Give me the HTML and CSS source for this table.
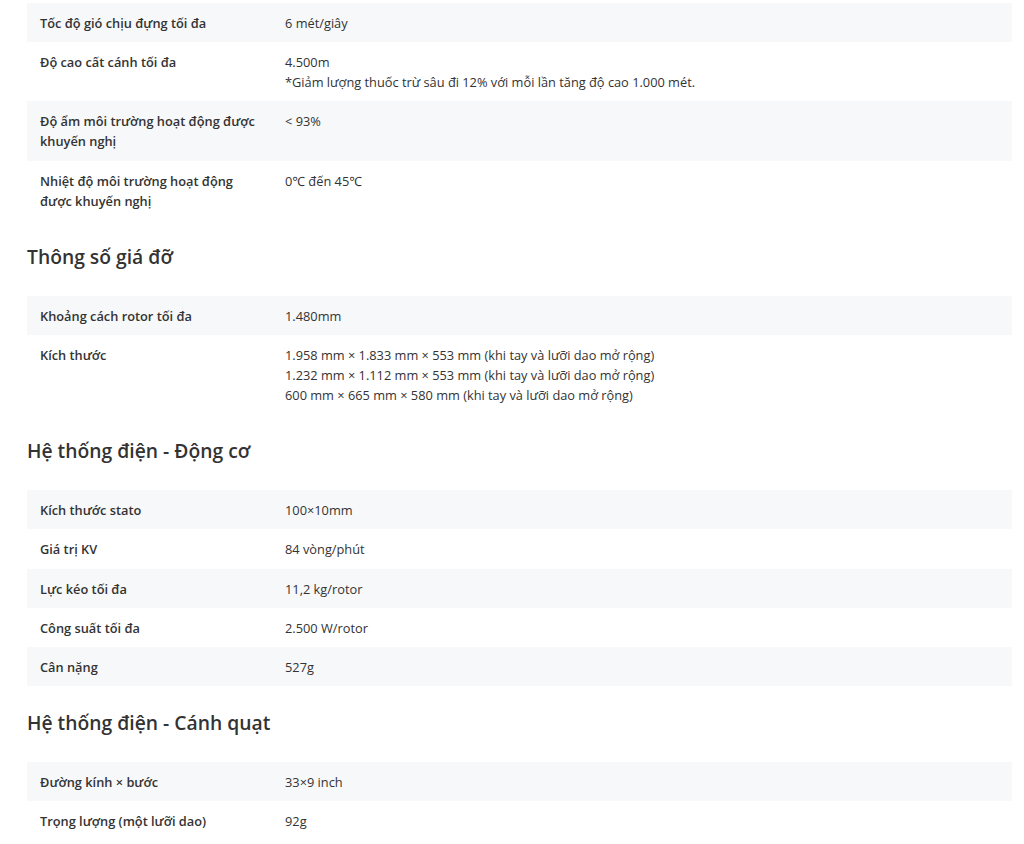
FILE: index.html
```html
<!doctype html>
<html lang="vi">
    <head>
        <meta charset="UTF-8" />
        <meta name="viewport" content="width=device-width, initial-scale=1.0" />
        <title>Thông số kỹ thuật</title>
        <link rel="stylesheet" href="styles.css">
    </head>
    <body>
        <div class="specs">
            <div class="spec-table">
                <div class="spec-row">
                    <div class="spec-label">Tốc độ gió chịu đựng tối đa</div>
                    <div class="spec-value">6 mét/giây</div>
                </div>
                <div class="spec-row">
                    <div class="spec-label">Độ cao cất cánh tối đa</div>
                    <div class="spec-value">4.500m<br />*Giảm lượng thuốc trừ sâu đi 12% với mỗi lần tăng độ cao 1.000 mét.</div>
                </div>
                <div class="spec-row">
                    <div class="spec-label">Độ ẩm môi trường hoạt động được khuyến nghị</div>
                    <div class="spec-value">&lt; 93%</div>
                </div>
                <div class="spec-row">
                    <div class="spec-label">Nhiệt độ môi trường hoạt động được khuyến nghị</div>
                    <div class="spec-value">0℃ đến 45℃</div>
                </div>
            </div>

            <h2 class="spec-title">Thông số giá đỡ</h2>
            <div class="spec-table">
                <div class="spec-row">
                    <div class="spec-label">Khoảng cách rotor tối đa</div>
                    <div class="spec-value">1.480mm</div>
                </div>
                <div class="spec-row">
                    <div class="spec-label">Kích thước</div>
                    <div class="spec-value">
                        1.958 mm × 1.833 mm × 553 mm (khi tay và lưỡi dao mở rộng)<br />
                        1.232 mm × 1.112 mm × 553 mm (khi tay và lưỡi dao mở rộng)<br />
                        600 mm × 665 mm × 580 mm (khi tay và lưỡi dao mở rộng)
                    </div>
                </div>
            </div>

            <h2 class="spec-title">Hệ thống điện - Động cơ</h2>
            <div class="spec-table">
                <div class="spec-row">
                    <div class="spec-label">Kích thước stato</div>
                    <div class="spec-value">100×10mm</div>
                </div>
                <div class="spec-row">
                    <div class="spec-label">Giá trị KV</div>
                    <div class="spec-value">84 vòng/phút</div>
                </div>
                <div class="spec-row">
                    <div class="spec-label">Lực kéo tối đa</div>
                    <div class="spec-value">11,2 kg/rotor</div>
                </div>
                <div class="spec-row">
                    <div class="spec-label">Công suất tối đa</div>
                    <div class="spec-value">2.500 W/rotor</div>
                </div>
                <div class="spec-row">
                    <div class="spec-label">Cân nặng</div>
                    <div class="spec-value">527g</div>
                </div>
            </div>

            <h2 class="spec-title">Hệ thống điện - Cánh quạt</h2>
            <div class="spec-table">
                <div class="spec-row">
                    <div class="spec-label">Đường kính × bước</div>
                    <div class="spec-value">33×9 inch</div>
                </div>
                <div class="spec-row">
                    <div class="spec-label">Trọng lượng (một lưỡi dao)</div>
                    <div class="spec-value">92g</div>
                </div>
            </div>
        </div>
    </body>
</html>
```

FILE: styles.css
```css
body {
    margin: 0;
    padding: 0;
    background: #ffffff;
    font-family: "Open Sans", "Noto Sans", sans-serif;
    color: #333333;
}

.specs {
    padding: 3px 12px 0 27px;
}

.spec-table {
    display: flex;
    flex-direction: column;
}

.spec-row {
    display: grid;
    grid-template-columns: 225px 1fr;
    column-gap: 20px;
    padding: 10px 13px 9.2px;
    font-size: 12.8px;
    line-height: 20px;
}

.spec-row:nth-child(odd) {
    background: #f7f8fa;
}

.spec-label {
    font-weight: 600;
}

.spec-value {
    font-weight: 400;
}

.spec-title {
    margin: 23px 0 25px;
    font-size: 19.3px;
    line-height: 28px;
    font-weight: 600;
    color: #333333;
}
```
